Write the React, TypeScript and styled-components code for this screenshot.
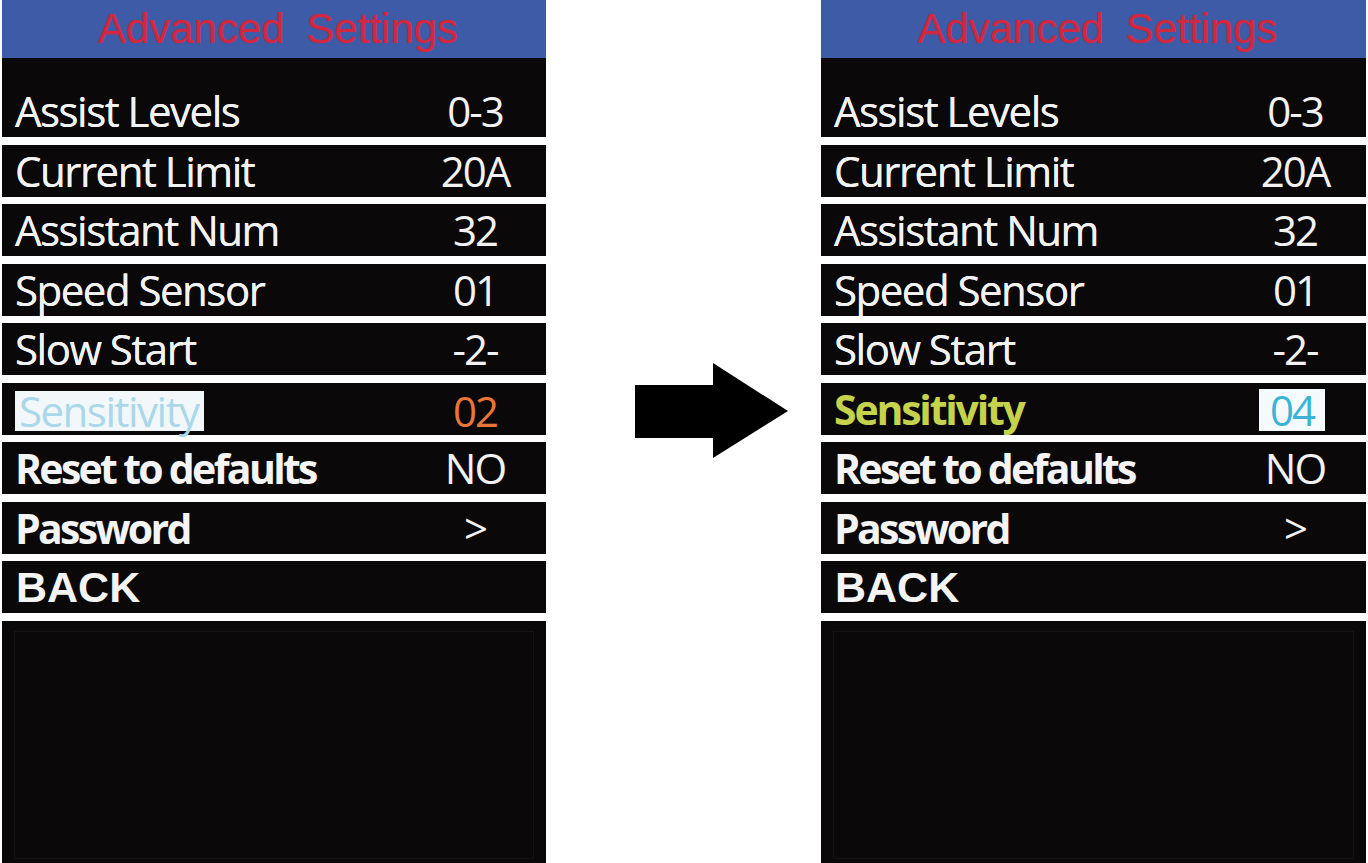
import styled, { createGlobalStyle } from 'styled-components'

type LabelTone = 'plain' | 'bold' | 'back' | 'picked' | 'active'
type ValueTone = 'plain' | 'orange' | 'boxed'

interface Item {
  label: string
  value?: string
  labelTone?: LabelTone
  valueTone?: ValueTone
}

const baseItems: Item[] = [
  { label: 'Assist Levels', value: '0-3' },
  { label: 'Current Limit', value: '20A' },
  { label: 'Assistant Num', value: '32' },
  { label: 'Speed Sensor', value: '01' },
  { label: 'Slow Start', value: '-2-' },
]

const tailItems: Item[] = [
  { label: 'Reset to defaults', value: 'NO', labelTone: 'bold' },
  { label: 'Password', value: '>', labelTone: 'bold' },
  { label: 'BACK', labelTone: 'back' },
]

const beforeItems: Item[] = [
  ...baseItems,
  { label: 'Sensitivity', value: '02', labelTone: 'picked', valueTone: 'orange' },
  ...tailItems,
]

const afterItems: Item[] = [
  ...baseItems,
  { label: 'Sensitivity', value: '04', labelTone: 'active', valueTone: 'boxed' },
  ...tailItems,
]

function SettingsScreen({ items, width }: { items: Item[]; width: number }) {
  return (
    <Panel $width={width}>
      <Header>
        <Title>Advanced Settings</Title>
      </Header>
      <Body>
        {items.map((item, i) => (
          <Row key={item.label} $lead={i === 0}>
            <Label $tone={item.labelTone ?? 'plain'}>{item.label}</Label>
            <ValueCell>
              {item.value && <Value $tone={item.valueTone ?? 'plain'}>{item.value}</Value>}
            </ValueCell>
          </Row>
        ))}
        <Filler>
          <Frame />
        </Filler>
      </Body>
    </Panel>
  )
}

export default function App() {
  return (
    <>
      <GlobalStyle />
      <Page>
        <SettingsScreen items={beforeItems} width={544} />
        <Middle>
          <svg width="153" height="96" viewBox="0 0 153 96">
            <polygon points="0,22 78,22 78,0 153,48 78,95 78,75 0,75" fill="#000" />
          </svg>
        </Middle>
        <SettingsScreen items={afterItems} width={545} />
      </Page>
    </>
  )
}

const GlobalStyle = createGlobalStyle`
  html, body {
    margin: 0;
    padding: 0;
    background: #ffffff;
    overflow: hidden;
  }
`

const Page = styled.div`
  display: flex;
  height: 863px;
  padding-left: 2px;
  background: #ffffff;
`

const Panel = styled.div<{ $width: number }>`
  width: ${(p) => p.$width}px;
  height: 863px;
  display: flex;
  flex-direction: column;
  flex-shrink: 0;
`

const Header = styled.div`
  height: 58px;
  background: #3d5ba7;
  display: flex;
  align-items: center;
  justify-content: center;
  padding-left: 8px;
`

const Title = styled.div`
  font-family: 'Liberation Sans', Arial, sans-serif;
  font-size: 42px;
  line-height: 1;
  color: #d3263f;
  word-spacing: 10px;
  text-shadow: 0 0 1px rgba(211, 38, 63, 0.6);
`

const Body = styled.div`
  flex: 1;
  display: flex;
  flex-direction: column;
  gap: 7.5px;
`

const Row = styled.div<{ $lead: boolean }>`
  height: ${(p) => (p.$lead ? 79 : 52)}px;
  padding: ${(p) => (p.$lead ? '27px' : '0')} 21px 0 13px;
  box-sizing: border-box;
  background: #0a0809;
  display: flex;
  align-items: center;
  justify-content: space-between;
`

const labelTones: Record<LabelTone, string> = {
  plain: `
    font-family: 'Open Sans', sans-serif;
    font-weight: 400;
    letter-spacing: -1.5px;
    color: #f2f2f2;
    text-shadow: 0 0 0.6px #f2f2f2;
  `,
  bold: `
    font-family: 'Open Sans', sans-serif;
    font-weight: 700;
    font-size: 41px;
    letter-spacing: -2.7px;
    color: #f4f4f4;
  `,
  back: `
    font-family: 'Liberation Sans', Arial, sans-serif;
    font-weight: 700;
    font-size: 43px;
    letter-spacing: 0;
    color: #f4f4f4;
    padding-left: 1px;
  `,
  picked: `
    font-family: 'Open Sans', sans-serif;
    font-weight: 400;
    letter-spacing: -1.5px;
    color: #aad7e9;
    background: #f2f8fa;
    padding: 0 5px 0 4px;
    line-height: 40px;
    margin-top: 4px;
  `,
  active: `
    font-family: 'Open Sans', sans-serif;
    font-weight: 700;
    font-size: 41px;
    letter-spacing: -2.2px;
    color: #c5d24c;
  `,
}

const Label = styled.span<{ $tone: LabelTone }>`
  font-size: 42px;
  line-height: 42px;
  white-space: nowrap;
  ${(p) => labelTones[p.$tone]}
`

const ValueCell = styled.div`
  width: 100px;
  display: flex;
  justify-content: center;
  align-items: center;
`

const valueTones: Record<ValueTone, string> = {
  plain: `color: #f2f2f2;`,
  orange: `color: #e8763a; margin-top: 4px;`,
  boxed: `
    color: #3cb3d4;
    background: #f5fbfd;
    width: 66px;
    text-align: center;
    line-height: 42px;
    margin-top: 2px;
    margin-left: -6px;
  `,
}

const Value = styled.span<{ $tone: ValueTone }>`
  font-family: 'Open Sans', sans-serif;
  font-size: 42px;
  font-weight: 400;
  line-height: 42px;
  letter-spacing: -2px;
  white-space: nowrap;
  ${(p) => valueTones[p.$tone]}
`

const Filler = styled.div`
  flex: 1;
  background: #0a0809;
  display: flex;
  padding: 10px 12px 4px 12px;
`

const Frame = styled.div`
  flex: 1;
  border: 1px solid #141213;
`

const Middle = styled.div`
  width: 275px;
  flex-shrink: 0;
  display: flex;
  align-items: flex-start;
  padding: 363px 0 0 89px;
  box-sizing: border-box;
`
